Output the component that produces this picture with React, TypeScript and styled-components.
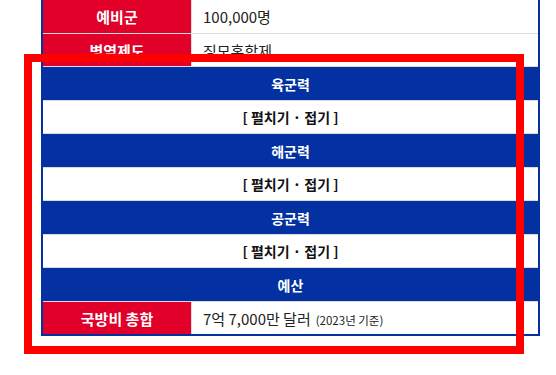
import React from 'react';
import styled, { createGlobalStyle } from 'styled-components';

const BLUE = '#0331a1';
const RED = '#e0002a';
const LINE = '#dcdcdc';

type Row =
  | { kind: 'data'; label: string; value: string; note?: string; tall?: boolean }
  | { kind: 'section'; title: string }
  | { kind: 'toggle' };

const ROWS: Row[] = [
  { kind: 'data', label: '예비군', value: '100,000명', tall: true },
  { kind: 'data', label: '병역제도', value: '징모혼합제' },
  { kind: 'section', title: '육군력' },
  { kind: 'toggle' },
  { kind: 'section', title: '해군력' },
  { kind: 'toggle' },
  { kind: 'section', title: '공군력' },
  { kind: 'toggle' },
  { kind: 'section', title: '예산' },
  { kind: 'data', label: '국방비 총합', value: '7억 7,000만 달러', note: '(2023년 기준)' },
];

const App: React.FC = () => (
  <Page>
    <GlobalStyle />
    <InfoTable>
      {ROWS.map((row, i) =>
        row.kind === 'section' ? (
          <SectionRow key={i}>{row.title}</SectionRow>
        ) : row.kind === 'toggle' ? (
          <ToggleRow key={i}>[ 펼치기 · 접기 ]</ToggleRow>
        ) : (
          <DataRow key={i} $tall={row.tall}>
            <LabelCell>{row.label}</LabelCell>
            <ValueCell>
              {row.value}
              {row.note && <Note>{row.note}</Note>}
            </ValueCell>
          </DataRow>
        )
      )}
    </InfoTable>
    <Highlight />
  </Page>
);

export default App;

// Elements

const GlobalStyle = createGlobalStyle`
  html, body {
    margin: 0;
    padding: 0;
    background: #fff;
  }
  body {
    font-family: 'Noto Sans CJK KR', 'Noto Sans', sans-serif;
  }
`;

const Page = styled.div`
  position: relative;
  width: 556px;
  height: 375px;
  overflow: hidden;
  padding-left: 41px;
  box-sizing: border-box;
`;

const InfoTable = styled.div`
  width: 499px;
  margin-top: -2px;
  border: 2px solid ${BLUE};
  box-sizing: border-box;
  display: flex;
  flex-direction: column;
  background: #fff;

  & > div + div {
    border-top: 1px solid ${LINE};
  }
`;

const DataRow = styled.div<{ $tall?: boolean }>`
  display: flex;
  height: ${({ $tall }) => ($tall ? 33 : 32)}px;
  box-sizing: content-box;
`;

const LabelCell = styled.div`
  width: 148px;
  flex: none;
  display: flex;
  align-items: center;
  justify-content: center;
  background: ${RED};
  color: #fff;
  font-weight: 700;
  font-size: 15px;
  border-right: 1px solid ${LINE};
`;

const ValueCell = styled.div`
  flex: 1 1 auto;
  display: flex;
  align-items: center;
  padding-left: 11px;
  color: #222;
  font-size: 15px;
`;

const Note = styled.span`
  font-size: 11.5px;
  margin-left: 5px;
  margin-top: 3px;
`;

const SectionRow = styled.div`
  height: 33px;
  display: flex;
  align-items: center;
  justify-content: center;
  background: ${BLUE};
  color: #fff;
  font-weight: 700;
  font-size: 14px;
`;

const ToggleRow = styled.div`
  height: 32px;
  display: flex;
  align-items: center;
  justify-content: center;
  color: #111;
  font-weight: 700;
  font-size: 14px;
  cursor: pointer;
`;

const Highlight = styled.div`
  position: absolute;
  left: 24px;
  top: 54px;
  width: 500px;
  height: 300px;
  box-sizing: border-box;
  border: 8px solid #ff0000;
  pointer-events: none;
`;
